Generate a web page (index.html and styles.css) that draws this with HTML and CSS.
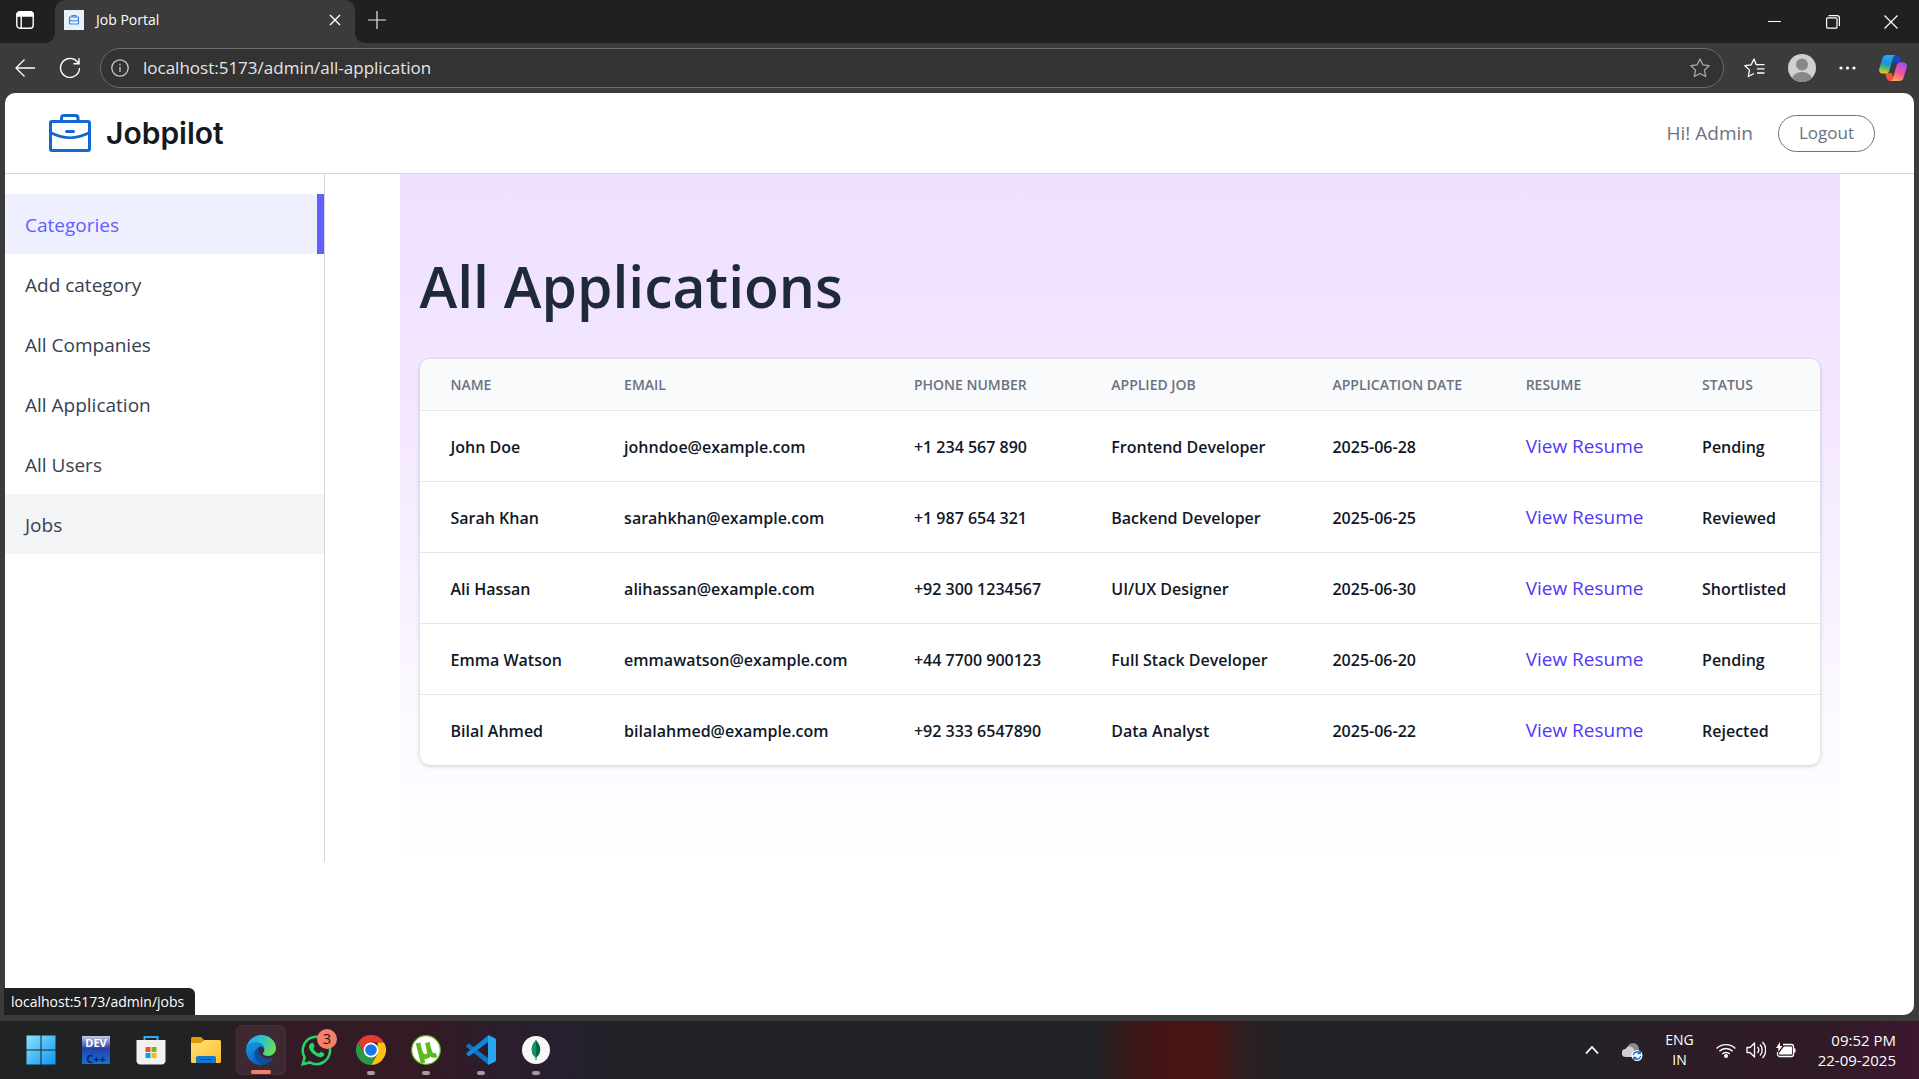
FILE: index.html
```html
<!DOCTYPE html>
<html lang="en">
<head>
<meta charset="utf-8">
<meta name="viewport" content="width=device-width, initial-scale=1">
<title>Job Portal</title>
<link rel="stylesheet" href="styles.css">
</head>
<body>
<div class="browser">
  <div class="titlebar">
    <button class="tab-menu" aria-label="Tab actions">
      <svg width="18" height="18" viewBox="0 0 18 18" fill="none" stroke="#fff" stroke-width="1.4"><rect x=".8" y=".8" width="16.4" height="16.4" rx="3"/><path d="M5.2 5v12"/><path d="M1 3.5a2.5 2.5 0 0 1 2.500-2.500h11a2.500 2.500 0 0 1 2.500 2.500V5H1z" fill="#fff"/></svg>
    </button>
    <div class="tab-slot">
      <div class="tab">
        <svg class="favicon" width="20" height="20" viewBox="0 0 20 20"><path fill="#e7f0fb" d="M0 0h20v20H0z"/><g fill="none" stroke="#3c86d8" stroke-width="1.2"><rect x="5.500" y="7" width="9" height="7" rx=".5"/><path d="M8 7V5.600h4V7M5.500 10q4.500 2 9 0"/></g></svg>
        <span class="tab-title">Job Portal</span>
        <button class="tab-close" aria-label="Close tab"><svg width="12" height="12" viewBox="0 0 12 12" stroke="#fff" stroke-width="1.4"><path d="m1 1 10 10M11 1 1 11"/></svg></button>
      </div>
    </div>
    <div class="title-rest">
      <button class="new-tab" aria-label="New tab"><svg width="18" height="18" viewBox="0 0 18 18" stroke="#e8e8e8" stroke-width="1.200"><path d="M9 0v18M0 9h18"/></svg></button>
      <div class="window-controls">
        <button aria-label="Minimize"><svg width="14" height="14" viewBox="0 0 14 14" stroke="#fff"><path d="M0 6.500h13"/></svg></button>
        <button aria-label="Restore"><svg width="14" height="14" viewBox="0 0 14 14" fill="none" stroke="#fff" stroke-width="1.200"><rect x=".6" y="2.800" width="10.400" height="10.400" rx="1"/><path d="M2.500.600h8.500a2.400 2.400 0 0 1 2.400 2.400v8"/></svg></button>
        <button aria-label="Close window"><svg width="14" height="14" viewBox="0 0 14 14" stroke="#fff" stroke-width="1.200"><path d="m.5.5 13 13M13.500.5l-13 13"/></svg></button>
      </div>
    </div>
  </div>

  <div class="toolbar">
    <button class="nav-btn" aria-label="Back"><svg width="20" height="18" viewBox="0 0 20 18" fill="none" stroke="#fff" stroke-width="1.300"><path d="M20 9H1M9.500.500 1 9l8.500 8.500"/></svg></button>
    <button class="nav-btn" aria-label="Reload"><svg width="22" height="22" viewBox="0 0 22 22" fill="none" stroke="#fff" stroke-width="1.400"><path d="M20.500 11A9.500 9.500 0 1 1 18 4.500l1.800 2M20 1.200v5.500h-5.500"/></svg></button>
    <div class="address">
      <svg width="18" height="18" viewBox="0 0 18 18" fill="none" stroke="#c8c8c8" stroke-width="1.300"><circle cx="9" cy="9" r="8.200"/><path d="M9 8v5M9 4.800v1.600"/></svg>
      <input class="url" type="text" aria-label="Address" value="localhost:5173/admin/all-application">
      <button class="star" aria-label="Add to favorites"><svg width="20" height="20" viewBox="0 0 20 20" fill="none" stroke="#aaa" stroke-width="1.300" stroke-linejoin="round"><path d="m10 1 2.800 5.800 6.300.9-4.600 4.400 1.200 6.400L10 15.500l-5.700 3 1.200-6.400L.9 7.700l6.300-.9z"/></svg></button>
    </div>
    <div class="tools">
      <button aria-label="Favorites"><svg width="21" height="20" viewBox="0 0 21 20" fill="none" stroke="#fff" stroke-width="1.300" stroke-linejoin="round"><path d="M14 6.800 12.200 6.500 10 1 7.200 6.800.900 7.700l4.600 4.400-1.200 6.400L10 15.500M12 6.700h8.500M13 10.800h7.500M13 15h7.500"/></svg></button>
      <button aria-label="Profile"><svg width="28" height="28" viewBox="0 0 28 28"><defs><clipPath id="avatar"><circle cx="14" cy="14" r="14"/></clipPath></defs><circle cx="14" cy="14" r="14" fill="#d2d0ce"/><g fill="#8a8886" clip-path="url(#avatar)"><circle cx="14" cy="10.500" r="6"/><ellipse cx="14" cy="25.500" rx="10" ry="7.500"/></g></svg></button>
      <button aria-label="Settings and more"><svg width="17" height="4" viewBox="0 0 17 4" fill="#fff"><circle cx="2" cy="2" r="1.600"/><circle cx="8.500" cy="2" r="1.600"/><circle cx="15" cy="2" r="1.600"/></svg></button>
      <button aria-label="Copilot"><svg width="28" height="26" viewBox="0 0 28 26"><defs><linearGradient id="cpa" x1=".5" y1="0" x2=".3" y2="1"><stop offset="0" stop-color="#1bb0f2"/><stop offset=".45" stop-color="#1c8fe0"/><stop offset=".7" stop-color="#4fb96a"/><stop offset="1" stop-color="#f5c518"/></linearGradient><linearGradient id="cpb" x1=".7" y1="0" x2=".3" y2="1"><stop offset="0" stop-color="#a44df0"/><stop offset=".5" stop-color="#f0549a"/><stop offset="1" stop-color="#fba35a"/></linearGradient></defs><path fill="#1846c4" d="M14 0h4c2 0 2.500 1.500 3 3l1.200 4.500H18c-2 0-3 1-3.500 3z"/><path fill="#f4513a" d="M6 18h7l2 8h-4c-2 0-2.800-1-3.300-3z"/><path fill="url(#cpa)" d="M7.500 0H17c-2 0-2.500 1.500-3 3l-3.800 13c-.4 1.500-1.200 2.500-3 2.500H3.500C.6 18.500-.4 16 .3 13.500L3.500 3C4.100 1 5.500 0 7.500 0z"/><path fill="url(#cpb)" d="M20.500 26H11c2 0 2.500-1.500 3-3l3.800-13c.4-1.500 1.200-2.500 3-2.500h3.700c2.900 0 3.900 2.500 3.200 5L24.500 23c-.6 2-2 3-4 3z"/></svg></button>
    </div>
  </div>

  <div class="viewport">
    <header class="header">
      <a class="brand" href="#">
        <svg width="42" height="38" viewBox="0 0 42 38" fill="none" stroke="#1267d2" stroke-width="3"><rect x="1.500" y="7.500" width="39" height="29" rx="1.500"/><path d="M12.500 7V4a2.500 2.500 0 0 1 2.500-2.500h11.500A2.500 2.500 0 0 1 29 4v3"/><path d="M1.500 18.500q19.500 10.500 39 0" stroke-width="2.600"/><path d="M17.500 17.500h7" stroke-linecap="round"/></svg>
        <span class="brand-name">Jobpilot</span>
      </a>
      <div class="account"><span>Hi! Admin</span><button class="logout">Logout</button></div>
    </header>
    <div class="content">
      <nav class="sidebar">
        <a class="item active" href="#">Categories</a>
        <a class="item" href="#">Add category</a>
        <a class="item" href="#">All Companies</a>
        <a class="item" href="#">All Application</a>
        <a class="item" href="#">All Users</a>
        <a class="item hovered" href="#">Jobs</a>
      </nav>
      <main class="main">
        <section class="panel">
          <h1 class="heading">All Applications</h1>
          <div class="card">
            <table class="table">
              <colgroup><col class="c-name"><col class="c-email"><col class="c-phone"><col class="c-job"><col class="c-date"><col class="c-resume"><col class="c-status"></colgroup>
              <thead><tr><th>Name</th><th>Email</th><th>Phone number</th><th>Applied job</th><th>Application date</th><th>Resume</th><th>Status</th></tr></thead>
              <tbody>
                <tr><td>John Doe</td><td>johndoe@example.com</td><td>+1 234 567 890</td><td>Frontend Developer</td><td>2025-06-28</td><td><a href="#">View Resume</a></td><td>Pending</td></tr>
                <tr><td>Sarah Khan</td><td>sarahkhan@example.com</td><td>+1 987 654 321</td><td>Backend Developer</td><td>2025-06-25</td><td><a href="#">View Resume</a></td><td>Reviewed</td></tr>
                <tr><td>Ali Hassan</td><td>alihassan@example.com</td><td>+92 300 1234567</td><td>UI/UX Designer</td><td>2025-06-30</td><td><a href="#">View Resume</a></td><td>Shortlisted</td></tr>
                <tr><td>Emma Watson</td><td>emmawatson@example.com</td><td>+44 7700 900123</td><td>Full Stack Developer</td><td>2025-06-20</td><td><a href="#">View Resume</a></td><td>Pending</td></tr>
                <tr><td>Bilal Ahmed</td><td>bilalahmed@example.com</td><td>+92 333 6547890</td><td>Data Analyst</td><td>2025-06-22</td><td><a href="#">View Resume</a></td><td>Rejected</td></tr>
              </tbody>
            </table>
          </div>
        </section>
      </main>
    </div>
    <div class="status-bubble">localhost:5173/admin/jobs</div>
  </div>
</div>

<footer class="taskbar">
  <div class="apps">
    <button class="app" aria-label="Start"><svg width="30" height="30" viewBox="0 0 30 30"><defs><linearGradient id="win" x1="0" y1="0" x2="1" y2="1"><stop offset="0" stop-color="#8ae4fd"/><stop offset="1" stop-color="#0f93f5"/></linearGradient></defs><path fill="url(#win)" d="M.5.500h14v14H.5zM15.500.500h14v14h-14zM.5 15.500h14v14H.5zM15.500 15.500h14v14h-14z"/></svg></button>
    <button class="app" aria-label="Dev-C++"><svg width="30" height="30" viewBox="0 0 30 30"><defs><linearGradient id="dev" x1="0" y1="0" x2="0" y2="1"><stop offset="0" stop-color="#c5c8e8"/><stop offset=".45" stop-color="#2440a8"/><stop offset="1" stop-color="#1273d8"/></linearGradient></defs><path fill="url(#dev)" d="M1 1h28v28H1z"/><text class="dev-top" x="15" y="12">DEV</text><text class="dev-bottom" x="15" y="28">C++</text></svg></button>
    <button class="app" aria-label="Microsoft Store"><svg width="30" height="30" viewBox="0 0 30 30"><path fill="none" stroke="#25b4ee" stroke-width="2" d="M8.500 6V2h13v4"/><path fill="#f1f1f1" d="M.5 5h29v20a4 4 0 0 1-4 4.500h-21a4 4 0 0 1-4-4.500z"/><path fill="#f25022" d="M9.500 12h5v5h-5z"/><path fill="#7fba00" d="M15.500 12h5v5h-5z"/><path fill="#00a4ef" d="M9.500 18h5v5h-5z"/><path fill="#ffb900" d="M15.500 18h5v5h-5z"/></svg></button>
    <button class="app" aria-label="File Explorer"><svg width="30" height="30" viewBox="0 0 30 30"><defs><linearGradient id="fold" x1="0" y1="0" x2="1" y2="1"><stop offset="0" stop-color="#ffe07a"/><stop offset="1" stop-color="#ffbf2a"/></linearGradient></defs><path fill="#e09a06" d="M0 3.500A1.500 1.500 0 0 1 1.500 2H10l3 3h15v5H0z"/><path fill="url(#fold)" d="M0 8h10l3.500-3H28.500A1.500 1.500 0 0 1 30 6.500v20a1.500 1.500 0 0 1-1.500 1.500h-27A1.500 1.500 0 0 1 0 26.500z"/><path fill="#1178cf" d="M5 28v-5a2 2 0 0 1 2-2h16a2 2 0 0 1 2 2v5z"/><path stroke="#0b4f91" d="M9 24.500h12"/></svg></button>
    <button class="app current" aria-label="Microsoft Edge"><svg width="30" height="30" viewBox="0 0 30 30"><defs><linearGradient id="edt" x1="0" y1=".3" x2="1" y2=".6"><stop offset="0" stop-color="#28a8ea"/><stop offset=".5" stop-color="#2cc5c9"/><stop offset="1" stop-color="#6fe04b"/></linearGradient><linearGradient id="edl" x1="0" y1="0" x2=".5" y2="1"><stop offset="0" stop-color="#1a9ce6"/><stop offset="1" stop-color="#0b5fc4"/></linearGradient></defs><path fill="url(#edt)" d="M.4 12.500C1.700 5 8 0 15 0c8.500 0 15 6 15 13 0 4.600-3.500 8-8 8-3 0-5-1.300-5-2.500 0-1 1.300-1.500 1.300-4 0-3.500-3-6-7.300-6-4.500 0-8 1.500-10.600 4z"/><path fill="url(#edl)" d="M0 15c0-4.500 4-8 9.500-8 5 0 8.700 3 8.800 7-1-2-2.500-2.500-4-2.300-3 .5-4.300 3.500-4.300 6.300 0 5 4 9 8 11.500-1 .4-2 .5-3 .5C6.500 30 0 23.300 0 15z"/><path fill="#0d4e98" d="M12.500 12.500C9.500 14 7.800 17 8.500 20.500c1 5 5.500 9 9.500 9.200 4-.9 7.500-3.200 9.300-6.200.4-.7-.2-1-.8-.7-5.500 2.700-14-.3-14-10.300z"/></svg></button>
    <button class="app" aria-label="WhatsApp, 3 unread"><svg width="31" height="31" viewBox="0 0 30 30"><path fill="none" stroke="#25d366" stroke-width="2.500" d="M1.700 28.300 3.500 21.600A13.200 13.200 0 1 1 8.500 26.500z"/><path fill="#25d366" d="M10.500 7.500c.8-.3 1.300 0 1.600.7l1 2.400c.3.8-1 1.700-1.200 2.200-.2.400 1.500 2.700 2.600 3.600 1.200.9 2.500 1.500 2.900 1.400.5-.2 1.300-1.800 2-1.500l2.700 1.300c.8.400.2 2.200-.4 2.800-1.300 1.300-3.300 1.500-5.800.5-3.700-1.500-8-6-8.200-9.200-.1-2.100 1.600-3.800 2.800-4.200z"/></svg><span class="badge">3</span></button>
    <button class="app running" aria-label="Google Chrome"><svg width="30" height="30" viewBox="0 0 30 30"><path fill="#e33b2e" d="M2 7.500a15 15 0 0 1 26 0H15L8.500 18.750z"/><path fill="#fbc116" d="M28 7.500a15 15 0 0 1-13 22.500l6.500-11.250V7.500z"/><path fill="#2a9a48" d="M2 7.500A15 15 0 0 0 15 30l6.500-11.250-13 0z"/><circle cx="15" cy="15" r="7.500" fill="#fff"/><circle cx="15" cy="15" r="5.800" fill="#1a73e8"/></svg></button>
    <button class="app running" aria-label="uTorrent"><svg width="30" height="30" viewBox="0 0 30 30"><circle cx="15" cy="15" r="14.300" fill="#fff" stroke="#5fb81f" stroke-width="1.200"/><path fill="none" stroke="#5fb81f" stroke-width="4.600" d="M7 8l5 20M9 15.500c1 5 3.500 6.500 6 6 3-.5 3.800-3 3-6L16.500 7.500M18 14c1 5 3 7.500 7.500 6"/></svg></button>
    <button class="app running" aria-label="Visual Studio Code"><svg width="30" height="30" viewBox="0 0 30 30"><path fill="#0a76c4" d="M.5 10.500 3 8.500l19 14.500v6.500L.5 12z"/><path fill="#1287d8" d="M.5 19.500 3 21.500 22 7V.5L.5 18z"/><path fill="#27a4f2" d="M22 0l6.500 3c1 .5 1.500 1.200 1.500 2.200v19.600c0 1-.5 1.700-1.500 2.200L22 30z"/></svg></button>
    <button class="app running" aria-label="MongoDB Compass"><svg width="30" height="30" viewBox="0 0 30 30"><circle cx="15" cy="15" r="14" fill="#f7f7f5"/><path fill="#00684a" d="M15 5c2.500 3 4.300 5.500 4.300 9.500 0 4-2 6.500-3.800 7.700V25h-1v-2.800c-1.800-1.200-3.800-3.700-3.800-7.700C10.700 10.500 12.500 8 15 5z"/><path fill="#13945f" d="M15 5c-2.500 3-4.300 5.500-4.300 9.500 0 4 2 6.500 3.800 7.700h.5z"/></svg></button>
  </div>
  <div class="tray">
    <button aria-label="Show hidden icons"><svg width="14" height="8" viewBox="0 0 14 8" fill="none" stroke="#fff" stroke-width="1.800"><path d="m1 7.500 6-6.500 6 6.500"/></svg></button>
    <button class="cloud" aria-label="OneDrive"><svg width="21" height="18" viewBox="0 0 21 18"><circle cx="11" cy="6" r="6" fill="#8b8b8b"/><path fill="#cfcfcf" d="M4 14a4 4 0 0 1-.5-8c2-4 8-3 8.500 1l1 7z"/><circle cx="15" cy="12.500" r="5.500" fill="#fff"/><path fill="none" stroke="#1a73d0" stroke-width="1.500" d="M11.300 12a3.800 3.800 0 0 1 6.500-2M18.700 13a3.800 3.800 0 0 1-6.500 2M18.200 7.800v2.700h-2.700M11.800 17.200v-2.700h2.700"/></svg></button>
    <button class="language">ENG<br>IN</button>
    <button class="system" aria-label="Network, volume, battery">
      <svg width="20" height="16" viewBox="0 0 20 16" fill="none" stroke="#fff" stroke-width="1.400"><path d="M.6 6.500a13.300 13.300 0 0 1 18.800 0M3.400 9.300a9.300 9.300 0 0 1 13.200 0M6.200 12.100a5.400 5.400 0 0 1 7.600 0"/><circle cx="10" cy="14" r="1.300" fill="#fff"/></svg>
      <svg width="20" height="18" viewBox="0 0 20 18" fill="none" stroke="#fff" stroke-width="1.300" stroke-linejoin="round"><path d="M1 6.500v5h3l4.500 4.500V2L4 6.500zM11.500 6a4.500 4.500 0 0 1 0 6M14 3.500a8 8 0 0 1 0 11M16.500 1a11.500 11.500 0 0 1 0 16"/></svg>
      <svg width="20" height="16" viewBox="0 0 20 16"><path fill="none" stroke="#fff" stroke-width="1.300" d="M7 2.500h8.500a2 2 0 0 1 2 2v8a2 2 0 0 1-2 2h-12a2 2 0 0 1-2-2V10"/><path fill="#fff" d="M8 4.500h7a1 1 0 0 1 1 1v6a1 1 0 0 1-1 1H4a1 1 0 0 1-1-1V11zM18 6.500h1.500v4H18zM4 0 0 6h2.500L2 10l4.500-6H4z"/></svg>
    </button>
    <button class="clock">09:52 PM<br>22-09-2025</button>
  </div>
</footer>
</body>
</html>
```
FILE: styles.css
```css
* { box-sizing: border-box; }

body {
  margin: 0;
  min-height: 100vh;
  display: flex;
  flex-direction: column;
  background: #3b3b3b;
  font-family: "Open Sans", "Noto Sans", sans-serif;
  font-size: 19px;
  line-height: 30px;
}

button {
  padding: 0;
  border: 0;
  background: none;
  color: inherit;
  font: inherit;
  display: flex;
  align-items: center;
  justify-content: center;
}

a { color: inherit; text-decoration: none; }
svg { display: block; flex: none; }

/* Browser chrome */
.browser {
  flex: 1;
  display: flex;
  flex-direction: column;
}

.titlebar { display: flex; height: 43px; }

.tab-menu {
  width: 55px;
  padding: 0 6px 3px 0;
  background: #202020;
  border-bottom-right-radius: 10px;
}

.tab-slot {
  width: 300px;
  background: linear-gradient(#202020 50%, #3b3b3b 50%);
}

.tab {
  height: 100%;
  display: flex;
  align-items: center;
  gap: 12px;
  padding: 0 14px 3px 9px;
  background: #3b3b3b;
  border-radius: 10px 10px 0 0;
  color: #fff;
  font-size: 14px;
}

.tab-title { flex: 1; }

.title-rest {
  flex: 1;
  display: flex;
  justify-content: space-between;
  padding: 0 21px 3px 13px;
  background: #202020;
  border-bottom-left-radius: 10px;
}

.window-controls { display: flex; gap: 44px; padding-top: 3px; }

.toolbar {
  height: 50px;
  display: flex;
  align-items: center;
  padding: 0 12px 0 14px;
}

.nav-btn { width: 22px; margin-right: 23px; }
.nav-btn + .nav-btn { margin-right: 19px; }

.address {
  flex: 1;
  height: 40px;
  display: flex;
  align-items: center;
  padding: 0 13px 0 10px;
  background: #333;
  border: 1px solid #6b6b6b;
  border-radius: 20px;
}

.url {
  flex: 1;
  margin-left: 14px;
  padding: 0;
  border: 0;
  outline: 0;
  background: none;
  color: #e6e6e6;
  font: 17px/24px "Open Sans", "Noto Sans", sans-serif;
}

.tools {
  display: flex;
  align-items: center;
  gap: 23px;
  padding-left: 20px;
}

/* Page */
.viewport {
  flex: 1;
  position: relative;
  margin: 0 5px 6px;
  background: #fff;
  border-radius: 10px;
}

.header {
  display: flex;
  align-items: center;
  justify-content: space-between;
  height: 81px;
  padding: 0 39px 0 44px;
  border-bottom: 1px solid #d1d5dc;
}

.brand { display: flex; align-items: center; gap: 15px; }

.brand-name {
  color: #18191c;
  font-family: Inter, "Open Sans", sans-serif;
  font-size: 30px;
  font-weight: 600;
}

.account {
  display: flex;
  align-items: center;
  gap: 25px;
  color: #6a7282;
}

.logout {
  height: 37px;
  padding: 0 20px;
  border: 1px solid #6a7282;
  border-radius: 19px;
  font-size: 17px;
}

.content { display: flex; }

.sidebar {
  width: 320px;
  padding-top: 20px;
  border-right: 1px solid #d1d5dc;
}

.item {
  display: block;
  padding: 16px 20px 14px;
  color: #364153;
}

.item.active {
  background: #eeefff;
  border-right: 7px solid #615fff;
  color: #615fff;
}

.item.hovered { background: #f3f4f6; }

.main { flex: 1; }

.panel {
  max-width: 1440px;
  margin: 0 auto;
  padding: 75px 20px 97px;
  background: linear-gradient(#efe0fe, #f3e7fe 33%, #f6edfe 50%, #fcf9ff 80%, #fff);
}

.heading {
  margin: 0 0 35px;
  color: #1e2939;
  font-size: 57px;
  font-weight: 600;
  line-height: 75px;
}

.card {
  overflow: hidden;
  background: #fff;
  border-radius: 10px;
  box-shadow: 0 1px 4px rgba(0, 0, 0, .2);
}

.table {
  width: 100%;
  table-layout: fixed;
  border-collapse: collapse;
  text-align: left;
  white-space: nowrap;
}

.c-name { width: 12.4%; }
.c-email { width: 20.7%; }
.c-phone { width: 14.1%; }
.c-job { width: 15.8%; }
.c-date { width: 13.8%; }
.c-resume { width: 12.6%; }
.c-status { width: 10.6%; }

.table th {
  height: 51px;
  padding: 2px 0 0 31px;
  background: #f9fafb;
  color: #6a7282;
  font-size: 14px;
  font-weight: 600;
  text-transform: uppercase;
}

.table td {
  height: 71px;
  padding: 2px 0 0 31px;
  border-top: 1px solid #e5e7eb;
  color: #101828;
  font-size: 16px;
  font-weight: 600;
}

.table a { color: #4f39f6; font-size: 19px; font-weight: 400; }

.status-bubble {
  position: absolute;
  left: -1px;
  bottom: 0;
  height: 27px;
  padding: 0 11px 0 7px;
  background: #202020;
  border-top-right-radius: 6px;
  color: #fff;
  font-size: 14px;
  line-height: 27px;
}

/* Taskbar */
.taskbar {
  height: 58px;
  display: flex;
  align-items: center;
  justify-content: space-between;
  padding: 0 23px 0 16px;
  background: linear-gradient(90deg, #202224 0, #202224 10%, #331a25 15%, #331a25 22%, #261f30 29%, #202226 33%, #202226 57%, #3a1818 59%, #481313 61%, #481313 63%, #2c1f20 65%, #202225 67%, #202226 82%, #2d1c26 88%, #2f1b27 95%, #3d1730 100%);
  color: #fff;
}

.apps { display: flex; gap: 5px; }

.app {
  position: relative;
  width: 50px;
  height: 50px;
  border-radius: 6px;
}

.app.current { background: #3e2831; border: 1px solid #483039; }

.app.current::after,
.app.running::after {
  content: "";
  position: absolute;
  bottom: 0;
  width: 20px;
  height: 4px;
  border-radius: 2px;
  background: #f5806a;
}

.app.running::after { width: 8px; background: #a39ca0; }

.badge {
  position: absolute;
  top: 4px;
  right: 4px;
  width: 20px;
  height: 20px;
  border-radius: 50%;
  background: #f5806a;
  color: #201010;
  font-size: 14px;
  line-height: 20px;
}

.dev-top, .dev-bottom { font-size: 11px; font-weight: 700; text-anchor: middle; fill: #fff; }
.dev-bottom { fill: #0a1f5c; }

.tray {
  display: flex;
  align-items: center;
  font-size: 14px;
  line-height: 20px;
}

.cloud { margin: 4px 22px 0 23px; }
.system { gap: 10px; margin: 0 22px; }
.clock { font-size: 15px; text-align: right; }
```
